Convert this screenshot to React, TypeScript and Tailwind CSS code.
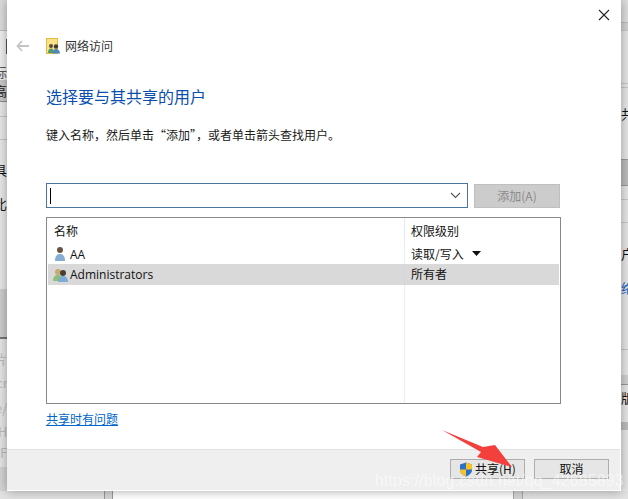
const CJK = "font-['Noto_Sans_CJK_SC','Noto_Sans',sans-serif]";

function Frag({ h, bg = "bg-[#ececec]", line = "", text = "", tc = "text-[#222]", ml = "ml-[-6px]" }: { h: string; bg?: string; line?: string; text?: string; tc?: string; ml?: string }) {
  return (
    <div className={`${h} ${bg} ${line} w-full shrink-0 overflow-hidden flex items-center`}>
      {text && <span className={`${ml} ${tc} text-[13px] leading-none whitespace-nowrap`}>{text}</span>}
    </div>
  );
}

function GroupIcon() {
  return (
    <svg width="18" height="16" viewBox="0 0 18 16" className="shrink-0">
      <circle cx="6" cy="5" r="3" fill="#c9a878" />
      <path d="M1 14c0-4 2-6 5-6s5 2 5 6z" fill="#8fbf72" />
      <circle cx="11" cy="6" r="3" fill="#4a3d34" />
      <path d="M6 15c0-4 2-6 5-6s5 2 5 6z" fill="#7fabd6" />
    </svg>
  );
}

export default function App() {
  return (
    <div className={`relative w-[628px] h-[499px] overflow-hidden bg-[#e6e6e6] ${CJK}`}>
      <div className="flex h-[491px]">
        {/* backdrop, left edge */}
        <div className="w-[7px] shrink-0 flex flex-col">
          <Frag h="h-[31px]" bg="bg-[#dcdcdc]" line="border-b border-[#bdbdbd]" />
          <div className="h-[31px] shrink-0 bg-[#efefef] flex justify-end pt-[8px]">
            <div className="w-px h-[15px] bg-[#555]" />
          </div>
          <Frag h="h-[18px]" text="标" tc="text-[#555]" bg="bg-[#efefef]" />
          <Frag h="h-[22px]" text="高" bg="bg-[#c9c9c9]" line="border-b border-[#8c8c8c]" />
          <Frag h="h-[15px]" bg="bg-[#e8e8e8]" line="border-b border-[#c4c4c4]" />
          <Frag h="h-[23px]" bg="bg-[#e8e8e8]" line="border-b border-[#c4c4c4]" />
          <Frag h="h-[18px]" bg="bg-[#e8e8e8]" />
          <Frag h="h-[22px]" text="具" bg="bg-[#e8e8e8]" tc="text-[#111]" />
          <Frag h="h-[12px]" bg="bg-[#e8e8e8]" />
          <Frag h="h-[22px]" text="比" bg="bg-[#e8e8e8]" tc="text-[#111]" />
          <Frag h="h-[76px]" bg="bg-[#e8e8e8]" line="border-b border-[#cfcfcf]" />
          <Frag h="h-[49px]" bg="bg-[#cdcdcd]" line="border-b-2 border-[#777]" />
          <Frag h="h-[7px]" bg="bg-[#e6e6e6]" />
          <Frag h="h-[24px]" text="片" tc="text-[#bbb]" bg="bg-[#e6e6e6]" />
          <Frag h="h-[25px]" text="cr" tc="text-[#bbb]" ml="ml-[-4px]" bg="bg-[#e6e6e6]" />
          <Frag h="h-[24px]" text="e/" tc="text-[#bbb]" ml="ml-[-5px]" bg="bg-[#e6e6e6]" />
          <Frag h="h-[25px]" text="tH" tc="text-[#bbb]" ml="ml-[-7px]" bg="bg-[#e6e6e6]" />
          <Frag h="h-[16px]" text="F" tc="text-[#bbb]" ml="ml-0" bg="bg-[#e6e6e6]" />
          <Frag h="h-[7px]" bg="bg-[#e6e6e6]" />
          <Frag h="h-[24px]" bg="bg-[#d4d4d4]" />
        </div>

        {/* dialog */}
        <div className="relative z-10 w-[614px] shrink-0 h-[491px] flex flex-col bg-white shadow-[0_0_10px_rgba(0,0,0,0.35)] border-r border-b border-white">
          <div className="h-[30px] shrink-0 flex justify-end items-start pt-[9px] pr-[10px]">
            <svg width="12" height="12" viewBox="0 0 12 12">
              <path d="M1 1l10 10M11 1L1 11" stroke="#222" strokeWidth="1.1" fill="none" />
            </svg>
          </div>

          <div className="flex-1 flex flex-col pl-[9px] pr-[60px]">
            <div className="flex items-center h-[20px] mt-[6px]">
              <svg width="14" height="12" viewBox="0 0 14 12" className="shrink-0">
                <path d="M6 1L1.5 6L6 11M1.5 6H13" stroke="#c4c4c4" strokeWidth="1.8" fill="none" />
              </svg>
              <svg width="15" height="16" viewBox="0 0 15 16" className="ml-[16px] shrink-0">
                <rect x="0.5" y="0.5" width="11" height="15" fill="#fbe08a" stroke="#e3bc3f" />
                <circle cx="5" cy="8" r="2" fill="#5a4a3c" />
                <path d="M2 15c0-3 1-4.500 3-4.500s3 1.500 3 4.500z" fill="#4f9a6a" />
                <circle cx="10" cy="8.500" r="2.200" fill="#3f3a38" />
                <path d="M6.500 15.500c0-3 1.500-4.500 3.500-4.500s4 1.500 4 4.500z" fill="#4f86c0" />
              </svg>
              <span className="ml-[4px] text-[12px] leading-none text-[#333]">网络访问</span>
            </div>

            <h1 className="ml-[30px] mt-[29px] text-[16px] leading-[22px] font-normal text-[#0a4fb0]">选择要与其共享的用户</h1>
            <p className="ml-[30px] mt-[19px] text-[12px] leading-[18px] text-[#1a1a1a] whitespace-nowrap">键入名称，然后单击“添加”，或者单击箭头查找用户。</p>

            <div className="ml-[30px] mt-[39px] flex items-stretch h-[25px]">
              <div className="w-[422px] border border-[#4a75a0] flex items-center justify-between pl-[3px] pr-[6px]">
                <div className="w-px h-[16px] bg-black" />
                <svg width="11" height="7" viewBox="0 0 11 7">
                  <path d="M1 1l4.500 4.500L10 1" stroke="#555" strokeWidth="1.1" fill="none" />
                </svg>
              </div>
              <button className="ml-[6px] w-[86px] mt-px bg-[#cccccc] border border-[#bfbfbf] text-[12px] text-[#8a8a8a] leading-none">添加(A)</button>
            </div>

            <div className="ml-[30px] mt-[9px] w-[515px] h-[187px] border border-[#888] flex flex-col text-[12px] text-[#111]">
              <div className="flex h-[25px] shrink-0 items-center">
                <span className="w-[357px] pl-[7px]">名称</span>
                <span className="pl-[6px] h-full flex items-center border-l border-[#e8e8e8]">权限级别</span>
              </div>
              <div className="flex h-[21px] shrink-0 items-center">
                <div className="w-[357px] pl-[7px] flex items-center">
                  <svg width="12" height="15" viewBox="0 0 12 15" className="shrink-0">
                    <circle cx="6" cy="4" r="3" fill="#6b5340" />
                    <path d="M1 15c0-5 2-7 5-7s5 2 5 7z" fill="#86aed2" />
                  </svg>
                  <span className="ml-[4px] mt-[2px] font-['Open_Sans',sans-serif] text-[12px]">AA</span>
                </div>
                <span className="pl-[6px] h-full flex items-center border-l border-[#e6eff8]">
                  读取/写入
                  <svg width="9" height="5" viewBox="0 0 9 5" className="ml-[8px]"><path d="M0 0h9L4.500 5z" fill="#111" /></svg>
                </span>
              </div>
              <div className="flex h-[21px] shrink-0 items-center bg-[#d9d9d9] mx-px">
                <div className="w-[356px] pl-[4px] flex items-center">
                  <GroupIcon />
                  <span className="font-['Open_Sans',sans-serif] text-[12px]">Administrators</span>
                </div>
                <span className="pl-[6px] pb-px h-full flex items-center border-l border-[#cfd6de]">所有者</span>
              </div>
              <div className="flex-1 flex">
                <div className="w-[357px]" />
                <div className="border-l border-[#e6eff8]" />
              </div>
            </div>

            <a className="ml-[30px] mt-[7px] self-start text-[12px] leading-[16px] text-[#0066cc] underline">共享时有问题</a>
          </div>

          <div className="h-[41px] shrink-0 bg-[#efefef] border-t border-[#e2e2e2] flex justify-end items-start pt-[9px] pr-[11px] gap-[9px]">
            <button className="w-[75px] h-[20px] border border-[#adadad] bg-[#e6e6e6] flex items-center justify-center text-[12px] text-[#111] leading-none">
              <svg width="14" height="15" viewBox="0 0 14 15" className="mr-[2px]">
                <path d="M7 0.500L13 2.500V8c0 3-3 5.500-6 6.500C4 13.500 1 11 1 8V2.500z" fill="#2a6fc9" />
                <path d="M7 0.500L13 2.500V7.500H7z" fill="#f7c325" />
                <path d="M7 7.500H1V8c0 3 3 5.500 6 6.500z" fill="#f7c325" />
              </svg>
              共享(H)
            </button>
            <button className="w-[75px] h-[20px] border border-[#adadad] bg-[#e6e6e6] text-[12px] text-[#111] leading-none">取消</button>
          </div>
        </div>

        {/* backdrop, right edge */}
        <div className="w-[7px] shrink-0 flex flex-col">
          <Frag h="h-[23px]" bg="bg-[#dedede]" line="border-b border-[#bdbdbd]" />
          <Frag h="h-[8px]" bg="bg-[#d2d2d2]" line="border-b border-[#c8c8c8]" />
          <Frag h="h-[53px]" bg="bg-[#e6e6e6]" line="border-b border-[#c8c8c8]" />
          <Frag h="h-[4px]" bg="bg-[#e6e6e6]" line="border-b border-[#c8c8c8]" />
          <Frag h="h-[50px]" text="共" ml="ml-0" tc="text-[#111]" bg="bg-[#e6e6e6]" />
          <Frag h="h-[21px]" bg="bg-[#e6e6e6]" />
          <Frag h="h-[27px]" bg="bg-[#bcbcbc]" line="border-y border-[#9a9a9a]" />
          <Frag h="h-[14px]" bg="bg-[#e6e6e6]" line="border-b border-[#c8c8c8]" />
          <Frag h="h-[23px]" bg="bg-[#e6e6e6]" line="border-b border-[#c8c8c8]" />
          <Frag h="h-[18px]" bg="bg-[#e6e6e6]" />
          <Frag h="h-[24px]" text="户" ml="ml-0" tc="text-[#111]" bg="bg-[#e6e6e6]" />
          <Frag h="h-[44px]" text="络" ml="ml-0" tc="text-[#1565c0]" bg="bg-[#e6e6e6]" />
          <Frag h="h-[41px]" bg="bg-[#e6e6e6]" line="border-b border-[#c4c4c4]" />
          <Frag h="h-[25px]" bg="bg-[#e6e6e6]" />
          <Frag h="h-[10px]" bg="bg-[#d0d0d0]" line="border-b border-[#999]" />
          <Frag h="h-[24px]" text="版" ml="ml-0" tc="text-[#111]" bg="bg-[#e6e6e6]" />
          <Frag h="h-[13px]" bg="bg-[#e6e6e6]" />
          <Frag h="h-[8px]" bg="bg-[#bdbdbd]" />
          <Frag h="h-[61px]" bg="bg-[#e6e6e6]" />
        </div>
      </div>

      {/* backdrop, bottom edge */}
      <div className="h-[8px] flex bg-[#e2e2e2]">
        <div className="ml-[104px] w-[9px] border-x border-[#999] bg-[#d6d6d6]" />
        <div className="w-[400px] bg-white" />
        <div className="w-[10px] border-x border-[#aaa] bg-[#d6d6d6]" />
      </div>

      {/* annotation overlaid on the screenshot */}
      <svg width="90" height="60" viewBox="0 0 90 60" className="absolute left-[438px] top-[426px] z-20">
        <path d="M4 4L45 21L57 19L74 41L39 31L43 26z" fill="#f4403c" />
      </svg>
      <div className="absolute z-20 left-[375px] top-[471px] font-['Liberation_Sans',sans-serif] text-[16px] leading-[20px] tracking-[0.1px] whitespace-nowrap text-white/50 blur-[0.5px]">https://blog.csdn.net/qq_42685893</div>
    </div>
  );
}
